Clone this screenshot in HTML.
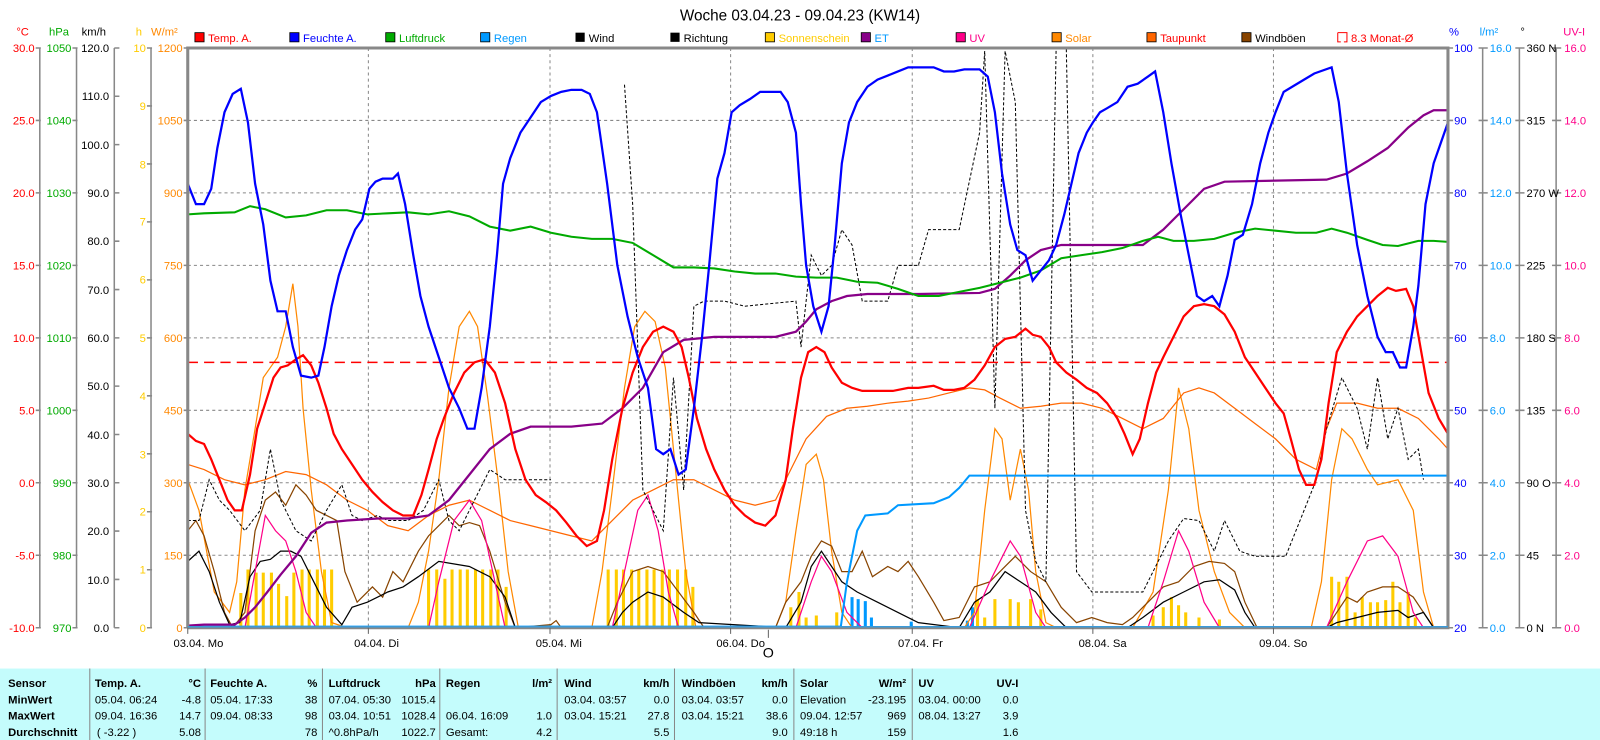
<!DOCTYPE html>
<html><head><meta charset="utf-8"><style>
html,body{margin:0;padding:0;background:#fff;width:1600px;height:740px;overflow:hidden}
svg{display:block}
text{font-family:"Liberation Sans",sans-serif}
</style></head><body>
<svg width="1600" height="740" viewBox="0 0 1568 725" preserveAspectRatio="none" xmlns="http://www.w3.org/2000/svg">
<rect width="1568" height="725" fill="#fff"/>
<text x="784" y="20" font-size="15" text-anchor="middle" fill="#000">Woche 03.04.23 - 09.04.23 (KW14)</text>
<g font-size="11">
<rect x="191" y="32" width="9" height="9" fill="#f00" stroke="#000" stroke-width=".8"/><text x="204" y="41" fill="#f00">Temp. A.</text>
<rect x="284" y="32" width="9" height="9" fill="#00f" stroke="#000" stroke-width=".8"/><text x="297" y="41" fill="#00f">Feuchte A.</text>
<rect x="378" y="32" width="9" height="9" fill="#0a0" stroke="#000" stroke-width=".8"/><text x="391" y="41" fill="#0a0">Luftdruck</text>
<rect x="471" y="32" width="9" height="9" fill="#09f" stroke="#000" stroke-width=".8"/><text x="484" y="41" fill="#09f">Regen</text>
<rect x="564" y="32" width="9" height="9" fill="#000"/><text x="577" y="41" fill="#000">Wind</text>
<rect x="657" y="32" width="9" height="9" fill="#000"/><text x="670" y="41" fill="#000">Richtung</text>
<rect x="750" y="32" width="9" height="9" fill="#fc0" stroke="#000" stroke-width=".8"/><text x="763" y="41" fill="#fc0">Sonnenschein</text>
<rect x="844" y="32" width="9" height="9" fill="#808" stroke="#000" stroke-width=".8"/><text x="857" y="41" fill="#09f">ET</text>
<rect x="937" y="32" width="9" height="9" fill="#f08" stroke="#000" stroke-width=".8"/><text x="950" y="41" fill="#f08">UV</text>
<rect x="1031" y="32" width="9" height="9" fill="#f80" stroke="#000" stroke-width=".8"/><text x="1044" y="41" fill="#f80">Solar</text>
<rect x="1124" y="32" width="9" height="9" fill="#f60" stroke="#000" stroke-width=".8"/><text x="1137" y="41" fill="#f00">Taupunkt</text>
<rect x="1217" y="32" width="9" height="9" fill="#840" stroke="#000" stroke-width=".8"/><text x="1230" y="41" fill="#000">Windböen</text>
<path d="M1311 32h9v9h-3M1311 32v9h3" fill="none" stroke="#f00"/><text x="1324" y="41" fill="#f00">8.3 Monat-Ø</text>
</g>
<!-- axis headers -->
<g font-size="11">
<text x="16" y="35" fill="#f00">°C</text><text x="48" y="35" fill="#0a0">hPa</text><text x="80" y="35" fill="#000">km/h</text>
<text x="133" y="35" fill="#fc0">h</text><text x="148" y="35" fill="#f80">W/m²</text>
<text x="1420" y="35" fill="#00f">%</text><text x="1450" y="35" fill="#09f">l/m²</text><text x="1490" y="35" fill="#000">°</text><text x="1532" y="35" fill="#f08">UV-I</text>
</g>
<!-- grid -->
<g stroke="#888" stroke-dasharray="3,3" stroke-width="1">
<path d="M184 118H1419M184 189H1419M184 260H1419M184 331H1419M184 402H1419M184 473H1419M184 544H1419"/>
<path d="M361 47V615M539 47V615M716 47V615M894 47V615M1071 47V615M1248 47V615"/>
</g>
<!-- left axes -->
<g stroke="#888" stroke-width="1.5" fill="none">
<path d="M39 47V615M75 47V615M112 47V615M148 47V615M1453 47V615M1489 47V615M1525 47V615"/>
<path d="M35 47h5M35 118h5M35 189h5M35 260h5M35 331h5M35 402h5M35 473h5M35 544h5M35 615h5"/>
<path d="M71 47h5M71 118h5M71 189h5M71 260h5M71 331h5M71 402h5M71 473h5M71 544h5M71 615h5"/>
<path d="M112 47h5M112 94.3h5M112 141.7h5M112 189h5M112 236.3h5M112 283.7h5M112 331h5M112 378.3h5M112 425.7h5M112 473h5M112 520.3h5M112 567.7h5M112 615h5"/>
<path d="M144 47h5M144 103.8h5M144 160.6h5M144 217.4h5M144 274.2h5M144 331h5M144 387.8h5M144 444.6h5M144 501.4h5M144 558.2h5M144 615h5"/>
<path d="M180 47h5M180 118h5M180 189h5M180 260h5M180 331h5M180 402h5M180 473h5M180 544h5M180 615h5"/>
<path d="M1419 47h5M1419 118h5M1419 189h5M1419 260h5M1419 331h5M1419 402h5M1419 473h5M1419 544h5M1419 615h5"/>
<path d="M1449 47h9M1449 118h9M1449 189h9M1449 260h9M1449 331h9M1449 402h9M1449 473h9M1449 544h9M1449 615h9"/>
<path d="M1485 47h9M1485 118h9M1485 189h9M1485 260h9M1485 331h9M1485 402h9M1485 473h9M1485 544h9M1485 615h9"/>
<path d="M1521 47h9M1521 118h9M1521 189h9M1521 260h9M1521 331h9M1521 402h9M1521 473h9M1521 544h9M1521 615h9"/>
</g>
<g font-size="11" text-anchor="end">
<g fill="#f00"><text x="34" y="51">30.0</text><text x="34" y="122">25.0</text><text x="34" y="193">20.0</text><text x="34" y="264">15.0</text><text x="34" y="335">10.0</text><text x="34" y="406">5.0</text><text x="34" y="477">0.0</text><text x="34" y="548">-5.0</text><text x="34" y="619">-10.0</text></g>
<g fill="#0a0"><text x="70" y="51">1050</text><text x="70" y="122">1040</text><text x="70" y="193">1030</text><text x="70" y="264">1020</text><text x="70" y="335">1010</text><text x="70" y="406">1000</text><text x="70" y="477">990</text><text x="70" y="548">980</text><text x="70" y="619">970</text></g>
<g fill="#000"><text x="107" y="51">120.0</text><text x="107" y="98">110.0</text><text x="107" y="146">100.0</text><text x="107" y="193">90.0</text><text x="107" y="240">80.0</text><text x="107" y="288">70.0</text><text x="107" y="335">60.0</text><text x="107" y="382">50.0</text><text x="107" y="430">40.0</text><text x="107" y="477">30.0</text><text x="107" y="524">20.0</text><text x="107" y="572">10.0</text><text x="107" y="619">0.0</text></g>
<g fill="#fc0"><text x="143" y="51">10</text><text x="143" y="108">9</text><text x="143" y="165">8</text><text x="143" y="221">7</text><text x="143" y="278">6</text><text x="143" y="335">5</text><text x="143" y="392">4</text><text x="143" y="449">3</text><text x="143" y="505">2</text><text x="143" y="562">1</text><text x="143" y="619">0</text></g>
<g fill="#f80"><text x="179" y="51">1200</text><text x="179" y="122">1050</text><text x="179" y="193">900</text><text x="179" y="264">750</text><text x="179" y="335">600</text><text x="179" y="406">450</text><text x="179" y="477">300</text><text x="179" y="548">150</text><text x="179" y="619">0</text></g>
</g>
<g font-size="11">
<g fill="#00f"><text x="1425" y="51">100</text><text x="1425" y="122">90</text><text x="1425" y="193">80</text><text x="1425" y="264">70</text><text x="1425" y="335">60</text><text x="1425" y="406">50</text><text x="1425" y="477">40</text><text x="1425" y="548">30</text><text x="1425" y="619">20</text></g>
<g fill="#09f"><text x="1460" y="51">16.0</text><text x="1460" y="122">14.0</text><text x="1460" y="193">12.0</text><text x="1460" y="264">10.0</text><text x="1460" y="335">8.0</text><text x="1460" y="406">6.0</text><text x="1460" y="477">4.0</text><text x="1460" y="548">2.0</text><text x="1460" y="619">0.0</text></g>
<g fill="#000"><text x="1496" y="51">360 N</text><text x="1496" y="122">315</text><text x="1496" y="193">270 W</text><text x="1496" y="264">225</text><text x="1496" y="335">180 S</text><text x="1496" y="406">135</text><text x="1496" y="477">90  O</text><text x="1496" y="548">45</text><text x="1496" y="619">0   N</text></g>
<g fill="#f08"><text x="1533" y="51">16.0</text><text x="1533" y="122">14.0</text><text x="1533" y="193">12.0</text><text x="1533" y="264">10.0</text><text x="1533" y="335">8.0</text><text x="1533" y="406">6.0</text><text x="1533" y="477">4.0</text><text x="1533" y="548">2.0</text><text x="1533" y="619">0.0</text></g>
</g>
<!-- sunshine bars -->
<path stroke="#fc0" stroke-width="3" fill="none" d="M236 615v-34M243 615v-57M251 615v-54M258 615v-54M266 615v-54M273 615v-43M281 615v-31M288 615v-54M296 615v-57M303 615v-57M311 615v-57M318 615v-57M325 615v-57
M420 615v-57M428 615v-57M436 615v-48M443 615v-57M451 615v-57M458 615v-57M466 615v-57M473 615v-57M481 615v-57M488 615v-57M496 615v-40
M596 615v-57M604 615v-57M611 615v-57M619 615v-57M626 615v-57M634 615v-57M641 615v-57M649 615v-57M656 615v-57M664 615v-57M672 615v-57M679 615v-40
M775 615v-20M783 615v-35M790 615v-10M800 615v-12M820 615v-15
M958 615v-28M965 615v-10M975 615v-28M990 615v-28M998 615v-25M1010 615v-28M1020 615v-18
M1130 615v-12M1140 615v-20M1148 615v-30M1155 615v-22M1162 615v-15M1175 615v-10M1195 615v-8
M1305 615v-50M1312 615v-45M1320 615v-50M1328 615v-15M1335 615v-30M1343 615v-25M1350 615v-25M1358 615v-27M1365 615v-45M1372 615v-25M1380 615v-35M1387 615v-10"/>
<path stroke="#09f" stroke-width="3" d="M835 615v-30M841 615v-28M848 615v-26M854 615v-10M893 615v-6M948 615v-7M953 615v-20"/>
<!-- solar -->
<polyline fill="none" stroke="#f80" stroke-width="1.2" points="184,470 195,500 210,580 225,600 232,570 240,480 250,420 258,370 265,360 272,350 280,320 287,278 292,320 297,400 305,480 315,560 325,610 340,615 400,615 410,590 420,540 430,470 440,380 450,320 460,305 468,320 478,390 488,470 498,560 508,615 580,615 590,560 600,480 612,380 622,320 632,305 642,315 652,360 662,460 672,560 682,615 760,615 770,590 780,520 790,455 800,445 807,470 815,540 825,600 835,615 945,615 955,600 965,500 975,420 982,430 990,490 1000,440 1008,480 1015,560 1025,610 1035,615 1110,615 1130,580 1145,480 1155,380 1165,420 1175,500 1190,560 1205,600 1220,615 1285,615 1295,570 1305,470 1315,420 1325,430 1340,460 1350,475 1370,470 1385,500 1395,580 1405,615 1419,615"/>
<!-- taupunkt -->
<polyline fill="none" stroke="#f60" stroke-width="1.2" points="184,455 200,460 220,470 240,475 260,470 280,462 300,465 320,475 340,490 360,500 380,515 400,520 420,505 440,495 460,490 480,500 500,510 520,515 540,520 560,525 580,530 600,510 620,490 640,480 660,470 680,470 700,480 720,490 740,495 760,490 775,460 790,430 810,408 830,400 850,398 870,395 890,393 910,390 930,385 950,380 965,382 980,390 1000,400 1020,398 1040,395 1060,395 1080,400 1100,410 1120,420 1140,410 1160,385 1175,380 1190,385 1210,400 1230,415 1250,430 1270,450 1290,460 1300,420 1310,395 1330,395 1350,400 1370,400 1390,410 1410,430 1419,440"/>
<!-- windboen -->
<polyline fill="none" stroke="#840" stroke-width="1.2" points="184,520 192,510 200,525 210,560 220,600 228,615 240,600 250,520 260,490 270,482 280,495 290,475 300,485 310,500 320,505 330,510 338,560 350,590 365,575 375,585 385,560 395,570 410,540 420,525 430,515 440,505 450,515 460,512 470,515 480,540 495,590 505,615 540,612 545,608 550,615 595,615 605,590 620,560 635,555 650,560 665,580 680,600 690,615 760,615 770,590 785,570 795,545 805,530 815,535 825,560 835,560 845,540 855,565 870,555 880,560 890,550 900,565 915,590 925,608 940,605 955,575 970,570 985,555 995,545 1010,560 1025,570 1040,595 1055,610 1070,605 1085,610 1100,612 1110,605 1125,590 1140,575 1155,570 1170,555 1185,550 1200,552 1210,560 1220,590 1232,615 1300,615 1310,600 1320,585 1330,590 1340,580 1355,575 1370,575 1385,585 1395,600 1405,615"/>
<!-- wind -->
<polyline fill="none" stroke="#000" stroke-width="1.2" points="184,550 195,540 205,560 215,590 225,612 235,610 245,565 255,550 265,548 275,540 285,540 295,545 305,565 320,595 335,612 345,595 360,590 380,580 395,575 410,565 430,550 460,555 480,565 495,585 505,615 600,615 610,600 620,590 635,580 650,585 670,600 685,610 770,615 785,590 795,555 805,540 815,555 825,570 840,580 860,590 880,600 900,610 940,615 955,590 970,580 985,560 1000,570 1015,580 1030,600 1045,615 1105,615 1120,605 1140,590 1160,580 1180,570 1195,568 1210,578 1220,600 1230,615 1300,615 1310,610 1330,605 1350,600 1370,598 1380,605 1395,600 1405,615"/>
<!-- UV -->
<polyline fill="none" stroke="#f08" stroke-width="1.2" points="184,615 240,615 250,560 260,505 270,520 280,530 290,560 300,600 310,615 420,615 430,570 445,510 460,490 472,510 485,570 495,615 600,615 612,560 625,500 635,485 645,520 655,580 665,615 780,615 795,570 805,545 815,560 830,600 845,615 950,615 970,570 990,530 1000,545 1015,600 1025,615 1125,615 1140,570 1155,520 1165,540 1180,590 1195,615 1300,615 1320,570 1340,530 1355,525 1370,545 1385,600 1395,615 1419,615"/>
<!-- richtung -->
<polyline fill="none" stroke="#000" stroke-width="1" stroke-dasharray="3,2" points="184,510 195,510 205,470 215,490 225,500 240,520 255,500 265,440 275,490 290,520 305,530 320,500 335,475 345,505 355,510 370,505 380,510 400,510 415,500 430,470 440,510 450,520 465,490 480,460 495,470 510,470 525,470 540,470"/>
<polyline fill="none" stroke="#000" stroke-width="1" stroke-dasharray="3,2" points="612,83 620,200 630,480 640,500 650,520 660,370 670,480 680,300 690,295 710,295 730,300 780,295 785,340 795,250 805,270 815,260 825,225 835,240 845,295 870,295 880,260 900,260 910,225 940,225 960,130 965,50 975,400 985,50 995,100 1005,500 1015,550 1025,570 1035,48 1045,48 1055,560 1070,580 1120,580 1130,560 1145,530 1160,508 1175,510 1190,540 1200,510 1215,540 1230,545 1260,545 1290,470 1300,420 1315,370 1330,400 1340,440 1350,370 1360,430 1370,400 1380,450 1390,440 1395,470"/>
<!-- rain -->
<polyline fill="none" stroke="#09f" stroke-width="2" points="184,614 824,614 830,570 840,520 848,505 870,503 880,495 915,493 930,487 940,478 950,466 1419,466"/>
<!-- monat line -->
<path d="M184 355H1419" stroke="#f00" stroke-width="1.5" stroke-dasharray="10,6"/>
<!-- ET -->
<polyline fill="none" stroke="#808" stroke-width="2.2" points="184,613 200,612 230,612 240,605 250,595 262,580 275,563 290,545 305,522 320,512 340,510 370,508 400,508 420,505 440,490 460,465 480,440 500,425 520,418 560,418 590,415 610,400 630,380 650,345 670,333 700,330 760,330 780,325 790,315 800,303 815,295 830,290 850,288 900,288 960,287 975,283 990,270 1005,255 1020,245 1040,240 1080,240 1120,240 1140,225 1160,205 1180,185 1200,178 1250,177 1300,176 1320,170 1340,158 1360,145 1380,125 1395,113 1405,108 1419,108"/>
<!-- pressure -->
<polyline fill="none" stroke="#0a0" stroke-width="2" points="184,210 200,209 230,208 245,202 260,205 280,213 300,211 320,206 340,206 360,210 380,209 400,208 420,210 440,207 460,212 480,222 500,226 520,222 540,228 560,232 580,234 600,234 620,238 640,250 660,262 680,262 700,263 720,266 740,268 760,268 780,271 800,272 820,272 840,276 860,277 880,283 900,290 920,290 940,286 960,282 980,277 1000,272 1020,265 1040,253 1060,250 1080,247 1100,243 1120,236 1135,232 1150,236 1170,236 1190,234 1210,228 1230,224 1250,226 1270,228 1290,228 1305,224 1320,228 1340,235 1355,240 1370,241 1390,236 1405,236 1419,237"/>
<!-- temp -->
<polyline fill="none" stroke="#f00" stroke-width="2.2" points="184,425 192,432 200,435 207,450 215,470 223,490 230,500 237,500 245,465 252,420 260,395 268,370 275,360 282,358 290,352 297,348 305,358 312,375 320,400 327,425 335,440 345,455 355,470 365,482 375,492 385,500 395,505 405,505 413,485 420,460 428,430 435,410 445,385 455,365 465,355 475,352 485,365 495,395 505,440 515,470 525,485 535,492 545,500 555,512 565,525 575,535 585,530 592,500 600,450 610,400 620,365 630,340 640,325 650,320 660,325 668,340 675,370 683,410 692,440 700,460 710,480 720,495 730,505 740,512 750,515 760,505 770,470 777,420 785,370 792,345 800,340 808,345 815,360 825,375 835,380 845,383 860,383 875,383 890,380 900,380 915,378 925,382 935,382 945,380 955,372 965,358 975,340 985,332 995,330 1005,322 1012,328 1020,330 1028,340 1035,355 1045,365 1055,372 1065,380 1075,385 1085,395 1095,410 1102,425 1110,445 1117,430 1125,395 1133,365 1140,350 1150,330 1160,310 1170,300 1180,298 1190,300 1200,308 1210,325 1220,350 1230,365 1240,380 1250,395 1258,405 1265,430 1273,460 1280,475 1288,475 1295,450 1302,395 1310,345 1320,325 1330,310 1340,300 1350,290 1360,282 1368,285 1378,283 1385,300 1392,340 1400,385 1410,410 1419,425"/>
<!-- humidity -->
<polyline fill="none" stroke="#00f" stroke-width="2.2" points="184,180 192,200 200,200 207,185 213,145 220,110 228,92 236,87 243,120 250,180 258,220 265,275 272,305 280,305 287,340 295,368 305,370 312,368 318,340 325,300 332,270 340,245 348,225 355,215 362,185 368,178 375,175 385,175 390,170 397,200 405,250 412,290 420,320 430,350 440,380 450,400 458,420 465,420 472,380 480,320 487,250 493,180 500,155 510,130 520,115 530,100 540,94 550,90 560,88 570,88 578,92 585,110 595,180 605,260 615,310 625,350 635,380 643,440 650,445 657,440 665,465 672,460 680,400 688,330 695,260 703,175 710,150 717,110 725,103 735,97 745,90 755,90 765,90 772,100 780,130 785,200 790,260 797,300 805,325 812,300 818,240 825,160 832,120 840,100 850,85 860,78 870,74 880,70 890,66 900,66 915,66 925,70 935,70 945,68 960,68 968,75 975,110 982,170 990,220 997,245 1005,250 1012,275 1020,265 1028,255 1035,240 1043,210 1050,180 1057,150 1065,130 1071,120 1078,110 1085,106 1095,100 1105,85 1115,82 1125,75 1132,70 1140,110 1148,160 1157,210 1165,250 1173,290 1180,295 1188,290 1195,300 1203,270 1210,235 1218,230 1227,200 1235,160 1243,130 1250,110 1258,90 1268,84 1278,78 1288,72 1305,66 1312,100 1320,170 1330,240 1340,290 1350,330 1358,345 1365,345 1372,360 1378,360 1385,320 1390,280 1397,200 1405,160 1412,140 1419,120"/>
<!-- border -->
<path d="M184 615V47H1419V615H184" fill="none" stroke="#888" stroke-width="3"/>
<path d="M184 614H1419" stroke="#3a9ad9" stroke-width="1.5"/>
<path d="M184 615v6M361 615v6M539 615v6M716 615v6M894 615v6M1071 615v6M1248 615v6M753 617v8" stroke="#666"/>
<g font-size="11" fill="#000">
<text x="170" y="634">03.04.  Mo</text><text x="347" y="634">04.04.  Di</text><text x="525" y="634">05.04.  Mi</text><text x="702" y="634">06.04.  Do</text><text x="880" y="634">07.04.  Fr</text><text x="1057" y="634">08.04.  Sa</text><text x="1234" y="634">09.04.  So</text>
</g>
<text x="753" y="644" font-size="14" text-anchor="middle">O</text>
<!-- table -->
<rect x="0" y="655" width="1568" height="70" fill="#c4fcfc"/>
<path d="M88 655V725M201 655V725M316 655V725M431 655V725M546 655V725M661 655V725M778 655V725M894 655V725" stroke="#888"/>
<g font-size="11" fill="#000">
<g font-weight="bold"><text x="8" y="673">Sensor</text><text x="8" y="689">MinWert</text><text x="8" y="705">MaxWert</text><text x="8" y="721">Durchschnitt</text>
<text x="93" y="673">Temp. A.</text><text x="206" y="673">Feuchte A.</text><text x="322" y="673">Luftdruck</text><text x="437" y="673">Regen</text><text x="553" y="673">Wind</text><text x="668" y="673">Windböen</text><text x="784" y="673">Solar</text><text x="900" y="673">UV</text></g>
<g font-weight="bold" text-anchor="end"><text x="197" y="673">°C</text><text x="311" y="673">%</text><text x="427" y="673">hPa</text><text x="541" y="673">l/m²</text><text x="656" y="673">km/h</text><text x="772" y="673">km/h</text><text x="888" y="673">W/m²</text><text x="998" y="673">UV-I</text></g>
<text x="93" y="689">05.04.  06:24</text><text x="93" y="705">09.04.  16:36</text><text x="95" y="721">( -3.22 )</text>
<text x="206" y="689">05.04.  17:33</text><text x="206" y="705">09.04.  08:33</text>
<text x="322" y="689">07.04.  05:30</text><text x="322" y="705">03.04.  10:51</text><text x="322" y="721">^0.8hPa/h</text>
<text x="437" y="705">06.04.  16:09</text><text x="437" y="721">Gesamt:</text>
<text x="553" y="689">03.04.  03:57</text><text x="553" y="705">03.04.  15:21</text>
<text x="668" y="689">03.04.  03:57</text><text x="668" y="705">03.04.  15:21</text>
<text x="784" y="689">Elevation</text><text x="784" y="705">09.04.  12:57</text><text x="784" y="721">49:18 h</text>
<text x="900" y="689">03.04.  00:00</text><text x="900" y="705">08.04.  13:27</text>
<g text-anchor="end">
<text x="197" y="689">-4.8</text><text x="197" y="705">14.7</text><text x="197" y="721">5.08</text>
<text x="311" y="689">38</text><text x="311" y="705">98</text><text x="311" y="721">78</text>
<text x="427" y="689">1015.4</text><text x="427" y="705">1028.4</text><text x="427" y="721">1022.7</text>
<text x="541" y="705">1.0</text><text x="541" y="721">4.2</text>
<text x="656" y="689">0.0</text><text x="656" y="705">27.8</text><text x="656" y="721">5.5</text>
<text x="772" y="689">0.0</text><text x="772" y="705">38.6</text><text x="772" y="721">9.0</text>
<text x="888" y="689">-23.195</text><text x="888" y="705">969</text><text x="888" y="721">159</text>
<text x="998" y="689">0.0</text><text x="998" y="705">3.9</text><text x="998" y="721">1.6</text>
</g>
</g>
</svg>
</body></html>
